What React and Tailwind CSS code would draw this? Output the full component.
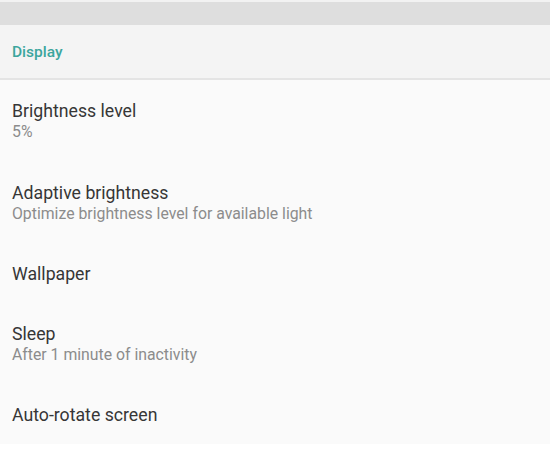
export default function App() {
  const rows = [
    { title: "Brightness level", sub: "5%" },
    { title: "Adaptive brightness", sub: "Optimize brightness level for available light" },
    { title: "Wallpaper" },
    { title: "Sleep", sub: "After 1 minute of inactivity" },
    { title: "Auto-rotate screen" },
  ];

  return (
    <div className="w-[550px] h-[449px] overflow-hidden bg-white font-['Roboto',sans-serif]">
      <div className="h-[2px] bg-[#f2f2f2]" />
      <div className="h-[23px] bg-[#dedede]" />
      <div className="h-[55px] bg-[#f4f4f4] flex items-center px-3 pt-[2px] border-b-2 border-[#e4e4e4]">
        <span className="text-[15.5px] font-medium text-[#3ca69d]">Display</span>
      </div>
      <div className="bg-[#fafafa]">
        {rows.map((r) => (
          <div
            key={r.title}
            className={`flex flex-col justify-center px-3 ${r.sub ? "h-[82px]" : "h-[59px]"}`}
          >
            <div className="text-[17.7px] leading-[22px] text-[#363636]">{r.title}</div>
            {r.sub && (
              <div className="text-[15.8px] leading-[20px] text-[#8c8c8c]">{r.sub}</div>
            )}
          </div>
        ))}
      </div>
    </div>
  );
}
